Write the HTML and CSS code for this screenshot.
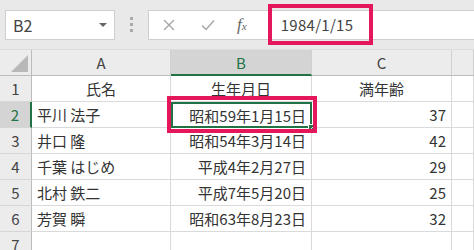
FILE: index.html
```html
<!DOCTYPE html>
<html lang="ja">
<head>
  <meta charset="UTF-8">
  <title>生年月日</title>
  <link rel="stylesheet" href="styles.css">
</head>
<body>
  <div class="toolbar">
    <div class="name-box">
      <span>B2</span>
      <span class="arrow"></span>
    </div>
    <div class="dots"><i></i><i></i><i></i></div>
    <div class="formula-box">
      <svg class="icon" width="16" height="16" viewBox="0 0 16 16"><path d="M3 3L13 13M13 3L3 13" stroke="#a6a6a6" stroke-width="1.4" fill="none"/></svg>
      <svg class="icon" width="16" height="16" viewBox="0 0 16 16"><path d="M2 8.5L6 12.5L14 3.5" stroke="#a6a6a6" stroke-width="1.4" fill="none"/></svg>
      <span class="fx">f<sub>x</sub></span>
      <span class="value">1984/1/15</span>
    </div>
    <div class="mark mark-formula"></div>
  </div>

  <div class="sheet">
    <div class="corner"><span class="tri"></span></div>
    <div class="col-head">A</div>
    <div class="col-head sel">B</div>
    <div class="col-head">C</div>
    <div class="col-head"></div>

    <div class="row-head">1</div>
    <div class="cell center">氏名</div>
    <div class="cell center">生年月日</div>
    <div class="cell center">満年齢</div>
    <div class="cell"></div>

    <div class="row-head sel">2</div>
    <div class="cell">平川 法子</div>
    <div class="cell right active">昭和59年1月15日<span class="handle"></span></div>
    <div class="cell right">37</div>
    <div class="cell"></div>

    <div class="row-head">3</div>
    <div class="cell">井口 隆</div>
    <div class="cell right">昭和54年3月14日</div>
    <div class="cell right">42</div>
    <div class="cell"></div>

    <div class="row-head">4</div>
    <div class="cell">千葉 はじめ</div>
    <div class="cell right">平成4年2月27日</div>
    <div class="cell right">29</div>
    <div class="cell"></div>

    <div class="row-head">5</div>
    <div class="cell">北村 鉄二</div>
    <div class="cell right">平成7年5月20日</div>
    <div class="cell right">25</div>
    <div class="cell"></div>

    <div class="row-head">6</div>
    <div class="cell">芳賀 瞬</div>
    <div class="cell right">昭和63年8月23日</div>
    <div class="cell right">32</div>
    <div class="cell"></div>

    <div class="row-head">7</div>
    <div class="cell"></div>
    <div class="cell"></div>
    <div class="cell"></div>
    <div class="cell"></div>

    <div class="mark mark-cell"></div>
  </div>
</body>
</html>
```

FILE: styles.css
```css
* {
  box-sizing: border-box;
}

body {
  margin: 0;
  width: 474px;
  height: 250px;
  overflow: hidden;
  background: #fff;
  font-family: "Noto Sans CJK JP", "Noto Sans", sans-serif;
  color: #333;
  position: relative;
}

.toolbar {
  position: relative;
  height: 50px;
  background: #e9e9e9;
  border-bottom: 1px solid #dcdcdc;
  display: flex;
  align-items: center;
  padding-left: 5px;
}

.name-box {
  width: 110px;
  height: 30px;
  background: #fff;
  border: 1px solid #cfcfcf;
  display: flex;
  align-items: center;
  justify-content: space-between;
  padding: 0 7px 0 7px;
  font-size: 16px;
  color: #444;
}

.arrow {
  width: 0;
  height: 0;
  border-left: 4px solid transparent;
  border-right: 4px solid transparent;
  border-top: 4px solid #666;
}

.dots {
  width: 33px;
  display: flex;
  flex-direction: column;
  align-items: center;
  gap: 3px;
}

.dots i {
  width: 3px;
  height: 3px;
  background: #aaa;
}

.formula-box {
  flex: 1;
  height: 30px;
  background: #fff;
  border: 1px solid #cfcfcf;
  border-right: none;
  display: flex;
  align-items: center;
  padding-left: 12px;
}

.icon {
  margin-right: 23px;
}

.fx {
  font-family: "Liberation Serif", serif;
  font-style: italic;
  font-size: 17px;
  color: #666;
  margin-left: -2px;
}

.fx sub {
  font-size: 11px;
  vertical-align: 0;
}

.value {
  margin-left: 34px;
  font-size: 15px;
  color: #444;
  letter-spacing: 0.3px;
}

.mark {
  position: absolute;
  border: 4px solid #e5175b;
  pointer-events: none;
}

.mark-formula {
  left: 268px;
  top: 4px;
  width: 105px;
  height: 41px;
}

.sheet {
  position: relative;
  display: grid;
  grid-template-columns: 32px 139px 141px 140px 1fr;
  grid-template-rows: 26px repeat(7, 26px);
}

.corner {
  background: #ececec;
  border-right: 1px solid #bcbcbc;
  border-bottom: 1px solid #bcbcbc;
  display: flex;
  align-items: flex-end;
  justify-content: flex-end;
  padding: 0 3px 3px 0;
}

.tri {
  width: 0;
  height: 0;
  border-left: 17px solid transparent;
  border-bottom: 17px solid #b8b8b8;
}

.col-head {
  background: #ececec;
  border-right: 1px solid #d0d0d0;
  border-bottom: 1px solid #bcbcbc;
  display: flex;
  align-items: center;
  justify-content: center;
  font-size: 15px;
  color: #444;
}

.col-head.sel {
  background: #d4d4d4;
  color: #217346;
  border-bottom: 2px solid #217346;
}

.row-head {
  background: #ececec;
  border-right: 1px solid #bcbcbc;
  border-bottom: 1px solid #d6d6d6;
  display: flex;
  align-items: center;
  justify-content: center;
  font-size: 15px;
  color: #444;
}

.row-head.sel {
  background: #d4d4d4;
  color: #217346;
  border-right: 2px solid #217346;
}

.cell {
  position: relative;
  border-right: 1px solid #dadada;
  border-bottom: 1px solid #dadada;
  display: flex;
  align-items: center;
  padding: 0 5px;
  font-size: 15px;
  white-space: nowrap;
}

.center {
  justify-content: center;
}

.right {
  justify-content: flex-end;
}

.active {
  border: 2px solid #217346;
  padding: 0 4px 0 3px;
}

.handle {
  position: absolute;
  right: -4px;
  bottom: -4px;
  width: 6px;
  height: 6px;
  background: #217346;
  border: 1px solid #fff;
}

.mark-cell {
  left: 167px;
  top: 46px;
  width: 150px;
  height: 37px;
}
```
